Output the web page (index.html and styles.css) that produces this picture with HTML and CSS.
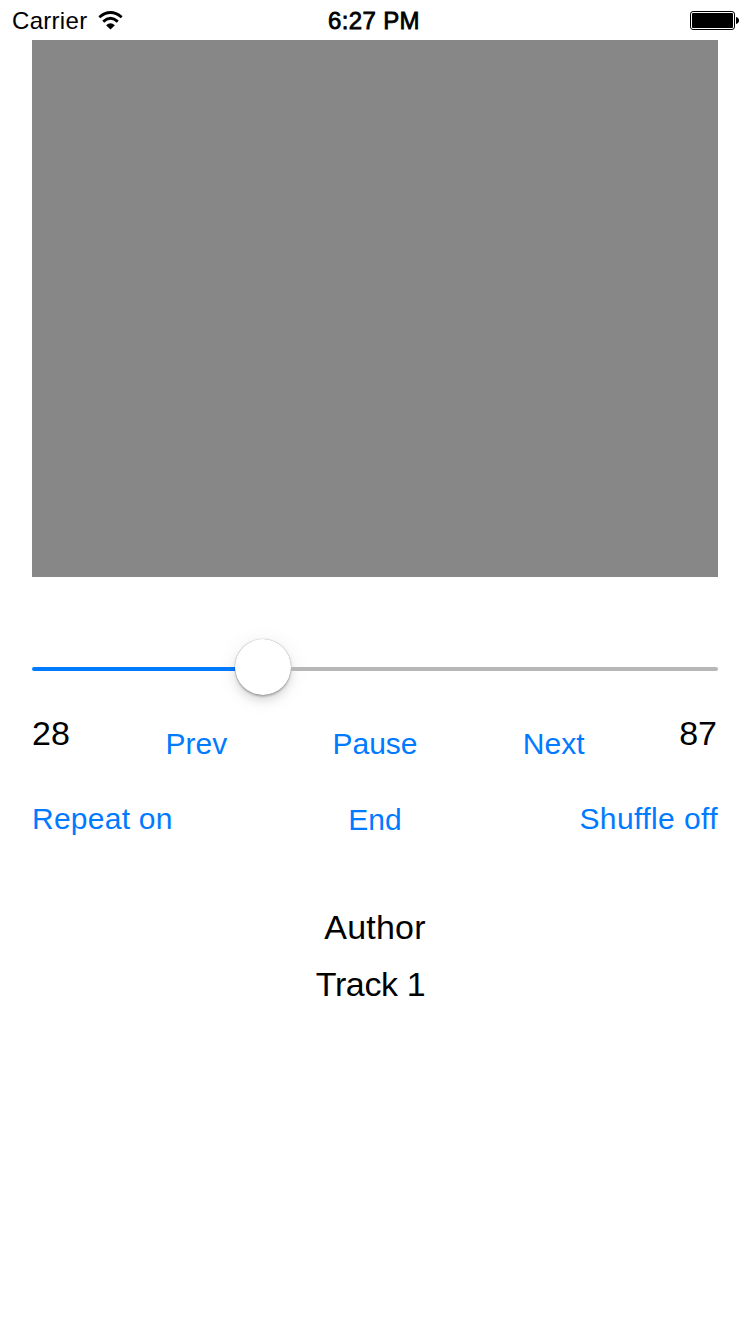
FILE: index.html
```html
<!DOCTYPE html>
<html lang="en">
<head>
<meta charset="utf-8">
<title>Player</title>
<link rel="stylesheet" href="styles.css">
</head>
<body>
<header class="status">
  <div class="network">
    <span class="carrier">Carrier</span>
    <svg class="wifi" width="26" height="20" viewBox="0 0 26 20" fill="none" stroke="#000">
      <path d="M1.3 7.2Q12.5 -2.2 23.7 7.2" stroke-width="2.8"/>
      <path d="M5.2 11.6Q12.5 5 19.8 11.6" stroke-width="2.8"/>
      <path d="M8.1 15.2Q12.5 11.4 16.9 15.2L12.5 19.6Z" fill="#000" stroke="none"/>
    </svg>
  </div>
  <span class="clock">6:27 PM</span>
  <svg class="battery" width="50" height="20" viewBox="0 0 50 20">
    <rect x=".5" y=".5" width="44" height="18" rx="2.6" fill="#fff" stroke="#000"/>
    <rect x="2" y="2" width="41" height="15" rx="1" fill="#000"/>
    <path d="M46 6C50 6.5 50 12.5 46 13Z" fill="#000"/>
  </svg>
</header>
<main class="player">
  <div class="artwork"></div>
  <div class="slider">
    <span class="played"></span>
    <span class="thumb"></span>
    <span class="remaining"></span>
  </div>
  <div class="transport">
    <span class="label elapsed">28</span>
    <a class="button prev">Prev</a>
    <a class="button pause">Pause</a>
    <a class="button next">Next</a>
    <span class="label total">87</span>
  </div>
  <div class="modes">
    <a class="button repeat">Repeat on</a>
    <a class="button end">End</a>
    <a class="button shuffle">Shuffle off</a>
  </div>
  <div class="label author">Author</div>
  <div class="label track">Track 1</div>
</main>
</body>
</html>
```
FILE: styles.css
```css
* { box-sizing: border-box; }
body {
  margin: 0;
  background: #fff;
  color: #000;
  font-family: "Liberation Sans", Arial, sans-serif;
}
.status {
  height: 40px;
  padding: 1px 10px 0 12px;
  display: grid;
  grid-template-columns: 1fr auto 1fr;
  font-size: 24px;
  line-height: 40px;
}
.network { display: flex; }
.carrier { width: 75px; letter-spacing: 0.3px; white-space: nowrap; }
.wifi { margin: 9px 0 0 11px; }
.clock { margin: 0 2px 0 -2px; -webkit-text-stroke: 0.8px #000; letter-spacing: 0.35px; }
.battery { justify-self: end; margin: 10px 0 0; }
.player { padding: 0 32px; }
.artwork { height: 537px; background: #878787; }
.slider {
  height: 57px;
  margin-top: 61px;
  display: flex;
  align-items: center;
}
.played, .remaining { height: 4px; margin-top: 5px; }
.played { width: 203px; background: #007aff; border-radius: 2px 0 0 2px; }
.remaining { flex: 1; background: #b7b7b7; border-radius: 0 2px 2px 0; }
.thumb {
  width: 56px;
  height: 56px;
  border-radius: 50%;
  background: #fff;
  box-shadow: 0 0 1px rgba(0,0,0,.5), 0 2px 2px rgba(0,0,0,.2), 0 6px 9px rgba(0,0,0,.1), 0 3px 22px rgba(0,0,0,.08);
}
.label { font-size: 34px; line-height: 40px; }
.button { font-size: 30px; line-height: 36px; color: #007aff; white-space: nowrap; }
.transport {
  margin-top: 18px;
  height: 88px;
  display: grid;
  grid-template-columns: 75px 1fr 1fr 1fr 75px;
  text-align: center;
}
.transport .button { margin-top: 13px; }
.elapsed { text-align: left; }
.total { text-align: right; padding-right: 1px; }
.modes {
  display: grid;
  grid-template-columns: 1fr auto 1fr;
  height: 106px;
}
.repeat { letter-spacing: 0.25px; }
.end { margin-top: 1px; }
.shuffle { text-align: right; letter-spacing: 0.42px; }
.author, .track { text-align: center; }
.author { margin-bottom: 17px; letter-spacing: 0.2px; }
.track { padding-right: 9px; letter-spacing: -0.4px; }
```
